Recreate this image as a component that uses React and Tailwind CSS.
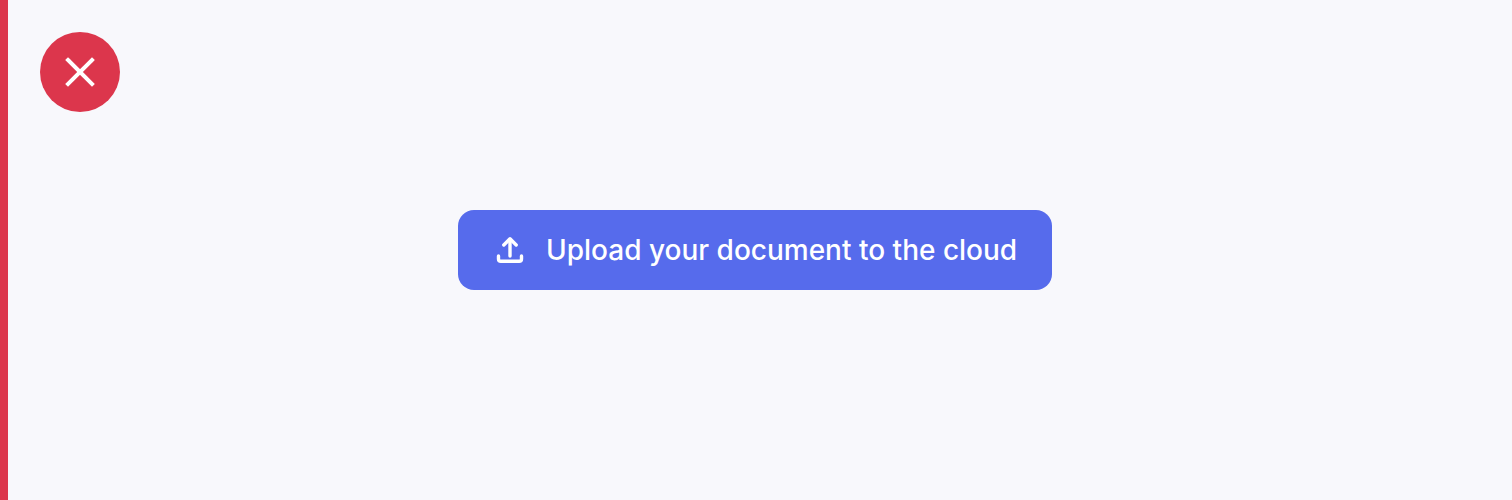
import React from "react";

const UploadIcon = () => (
  <svg width="32" height="32" viewBox="0 0 32 32" fill="none" stroke="currentColor" strokeWidth="3.4" strokeLinecap="round" strokeLinejoin="round">
    <path d="M16 22V5.5" />
    <path d="M9.8 11L16 4.8L22.2 11" />
    <path d="M4.5 22V25C4.5 26.6 5.2 27.3 6.8 27.3H25.2C26.8 27.3 27.5 26.6 27.5 25V22" />
  </svg>
);

const App = () => {
  return (
    <div className="relative h-[500px] bg-[#f8f8fc] border-l-8 border-[#dc364c] pr-[10px] flex items-center justify-center font-['Inter',sans-serif]">
      {/* Close */}
      <button className="absolute left-[32px] top-[32px] w-20 h-20 rounded-full bg-[#dc364c] text-white flex items-center justify-center">
        <svg width="32" height="32" viewBox="0 0 32 32" fill="none" stroke="currentColor" strokeWidth="4" strokeLinecap="square">
          <path d="M4 4L28 28" />
          <path d="M28 4L4 28" />
        </svg>
      </button>

      {/* Upload */}
      <button className="h-20 w-[594px] rounded-2xl bg-[#566bec] text-white flex items-center pl-[36px] gap-[20px] text-[28px] font-[450] whitespace-nowrap">
        <UploadIcon />
        <span>Upload your document to the cloud</span>
      </button>
    </div>
  );
};

export default App;
